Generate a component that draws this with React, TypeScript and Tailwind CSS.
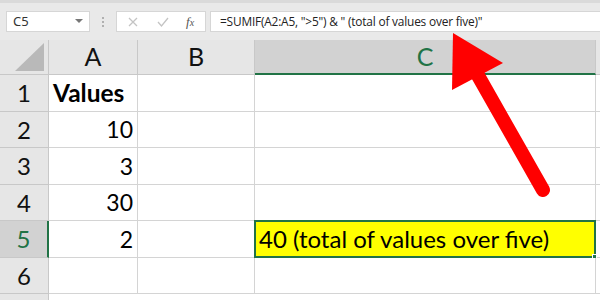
import React from "react";

const rowHeights = [37, 36, 37, 36, 37, 36];

export default function App() {
  const cell = "border-r border-b border-[#d4d4d4] bg-white shrink-0";
  const rows = [
    { n: "1", a: "Values", bold: true },
    { n: "2", a: "10" },
    { n: "3", a: "3" },
    { n: "4", a: "30" },
    { n: "5", a: "2", sel: true },
    { n: "6", a: "" },
  ];
  return (
    <div className="w-[600px] h-[300px] overflow-hidden relative bg-[#e6e6e6]" style={{ fontFamily: "Lato, sans-serif" }}>
      {/* formula bar */}
      <div className="h-[40px] flex items-start pt-[11px] bg-[#e9e9e9] border-t-[3px] border-[#dadada]">
        <div className="ml-[6px] -mt-[3px] w-[84px] h-[21px] bg-white border border-[#d6d6d6] flex items-center justify-between px-[6px]">
          <span className="text-[13px] text-[#333]" style={{ fontFamily: "'Noto Sans', sans-serif" }}>C5</span>
          <svg width="8" height="5" viewBox="0 0 8 5"><path d="M0 0h8L4 4z" fill="#777" /></svg>
        </div>
        <div className="w-[26px] -mt-[3px] h-[21px] flex flex-col items-center justify-center gap-[2px]">
          <span className="w-[2px] h-[2px] bg-[#b0b0b0]" />
          <span className="w-[2px] h-[2px] bg-[#b0b0b0]" />
          <span className="w-[2px] h-[2px] bg-[#b0b0b0]" />
        </div>
        <div className="-mt-[3px] w-[90px] h-[21px] bg-white border border-[#d6d6d6] flex items-center">
          <svg className="ml-[11px]" width="10" height="10" viewBox="0 0 10 10"><path d="M1 1l8 8M9 1l-8 8" stroke="#c4c4c4" strokeWidth="1.3" /></svg>
          <svg className="ml-[19px]" width="12" height="10" viewBox="0 0 12 10"><path d="M1 5l3.5 4L11 1" stroke="#c4c4c4" strokeWidth="1.3" fill="none" /></svg>
          <span className="ml-[17px] text-[13px] italic text-[#555]" style={{ fontFamily: "'Liberation Serif', serif" }}>f<span className="text-[10px]">x</span></span>
        </div>
        <div className="-mt-[3px] ml-[4px] flex-1 h-[21px] bg-white border border-[#d6d6d6] border-r-0 flex items-center pl-[9px]">
          <span className="text-[11.9px] text-[#222] whitespace-nowrap" style={{ fontFamily: "'Open Sans', sans-serif", letterSpacing: "-0.2px" }}>
            =SUMIF(A2:A5, "&gt;5") &amp; " (total of values over five)"
          </span>
        </div>
      </div>
      {/* column header */}
      <div className="flex h-[35px]">
        <div className="w-[49px] shrink-0 border-r border-b border-[#c8c8c8] bg-[#e6e6e6] relative">
          <svg className="absolute right-[4px] bottom-[3px]" width="29" height="28" viewBox="0 0 29 28"><path d="M29 0V28H0z" fill="#b9b9b9" /></svg>
        </div>
        <div className="w-[89px] shrink-0 border-r border-b border-[#c8c8c8] flex items-center justify-center text-[25px] text-[#111]">A</div>
        <div className="w-[117px] shrink-0 border-r border-b border-[#c8c8c8] flex items-center justify-center text-[25px] text-[#111]">B</div>
        <div className="w-[341px] shrink-0 border-r border-[#c8c8c8] border-b-2 border-b-[#217346] bg-[#d2d2d2] flex items-center justify-center text-[25px] text-[#217346]">C</div>
        <div className="flex-1 border-b border-[#c8c8c8]" />
      </div>
      {rows.map((r, i) => (
        <div key={r.n} className="flex" style={{ height: rowHeights[i] }}>
          <div className={`w-[49px] shrink-0 border-b border-[#c8c8c8] flex items-center justify-center text-[24px] ${r.sel ? "bg-[#d2d2d2] text-[#217346] border-r-2 border-r-[#217346]" : "bg-[#e6e6e6] text-[#111] border-r border-r-[#c8c8c8]"}`}>
            {r.n}
          </div>
          <div className={`${cell} w-[89px] flex items-center ${r.bold ? "justify-start pl-[4px] font-bold text-[24.5px]" : "justify-end pr-[4px] text-[23px]"} text-black`}>
            {r.a}
          </div>
          <div className={`${cell} w-[117px]`} />
          <div className={`${cell} w-[341px] relative`}>
            {r.sel && (
              <div className="absolute -left-[1px] -top-[1px] right-[-1px] bottom-[-1px] bg-[#ffff00] border-2 border-[#217346] flex items-center pl-[3px] text-[24px] text-black whitespace-nowrap">
                40 (total of values over five)
                <span className="absolute -right-[3px] -bottom-[3px] w-[5px] h-[5px] bg-[#217346] border border-white" />
              </div>
            )}
          </div>
          <div className="flex-1 bg-white border-b border-[#d4d4d4]" />
        </div>
      ))}
      <div className="flex h-[20px]">
        <div className="w-[49px] shrink-0 border-r border-[#c8c8c8] bg-[#e6e6e6]" />
        <div className="flex-1 bg-white" />
      </div>
      {/* red arrow */}
      <svg className="absolute left-0 top-0 pointer-events-none" width="600" height="300" viewBox="0 0 600 300">
        <path d="M453 33 L452 90 L503 63 Z" fill="#ff0000" />
        <line x1="476" y1="72" x2="543" y2="190" stroke="#ff0000" strokeWidth="14" strokeLinecap="round" />
      </svg>
    </div>
  );
}
